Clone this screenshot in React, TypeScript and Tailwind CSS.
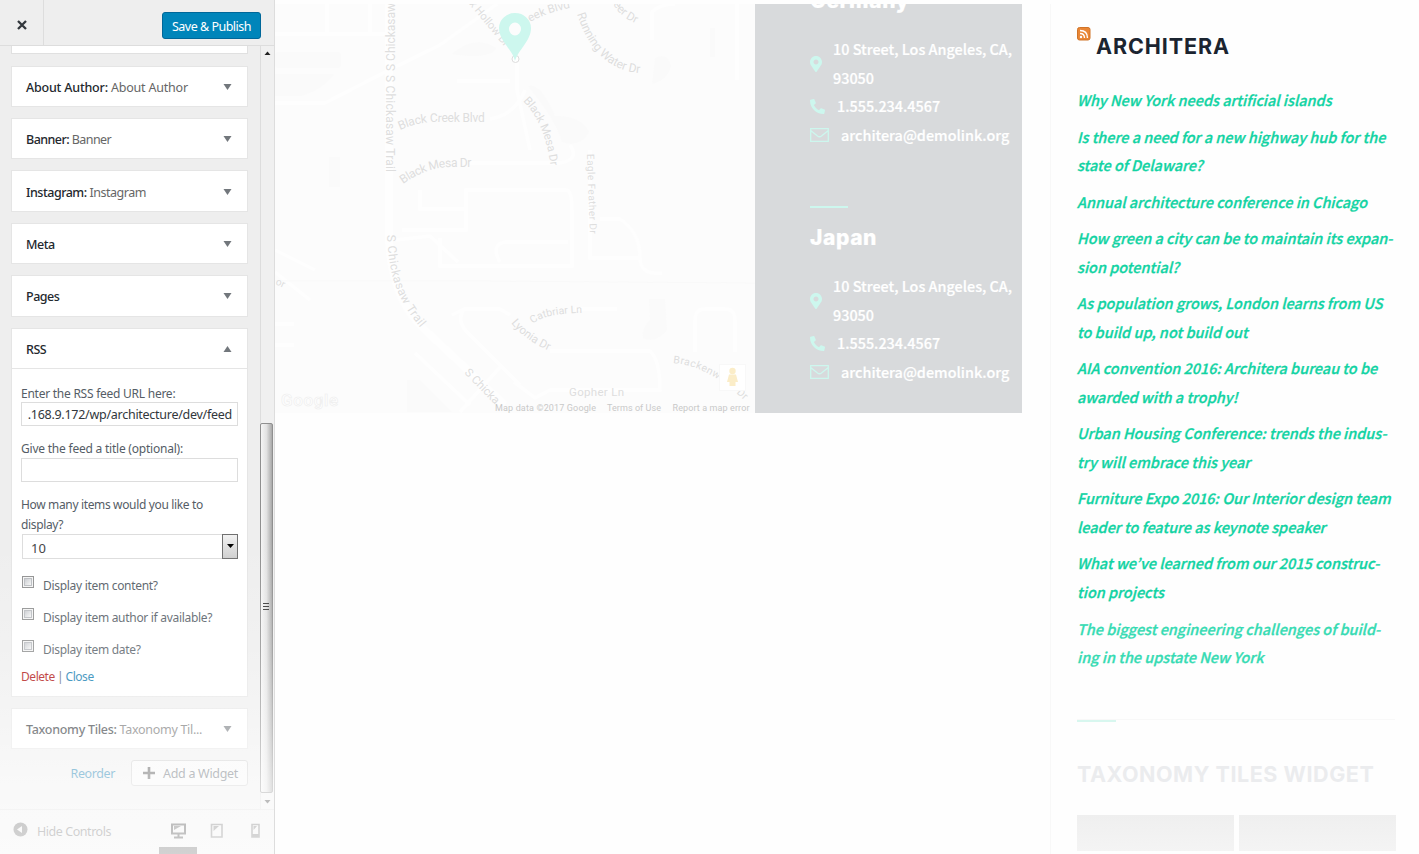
import React from "react";
import { FaMapMarkerAlt, FaPhone } from "react-icons/fa";

type Widget = { title: string; name?: string; tracking?: string };

const widgets: Widget[] = [
  { title: "About Author", name: "About Author", tracking: "tracking-[-0.2px]" },
  { title: "Banner", name: "Banner", tracking: "tracking-[-0.55px]" },
  { title: "Instagram", name: "Instagram", tracking: "tracking-[-0.48px]" },
  { title: "Meta" },
  { title: "Pages" },
];

const posts: string[][] = [
  ["Why New York needs artificial islands"],
  ["Is there a need for a new highway hub for the", "state of Delaware?"],
  ["Annual architecture conference in Chicago"],
  ["How green a city can be to maintain its expan-", "sion potential?"],
  ["As population grows, London learns from US", "to build up, not build out"],
  ["AIA convention 2016: Architera bureau to be", "awarded with a trophy!"],
  ["Urban Housing Conference: trends the indus-", "try will embrace this year"],
  ["Furniture Expo 2016: Our Interior design team", "leader to feature as keynote speaker"],
  ["What we’ve learned from our 2015 construc-", "tion projects"],
  ["The biggest engineering challenges of build-", "ing in the upstate New York"],
];

function Triangle({ up = false }: { up?: boolean }) {
  return (
    <svg width="9" height="6" viewBox="0 0 9 6" className="mb-px fill-[#72777c]">
      <path d={up ? "M0.5 6L4.5 0L8.5 6Z" : "M0.5 0L4.5 6L8.5 0Z"} />
    </svg>
  );
}

function WidgetHeader({ title, name, up, tracking = "tracking-[-0.5px]" }: Widget & { up?: boolean }) {
  return (
    <div className={`flex h-[39.3px] items-center justify-between pt-[2px] pr-[15px] pl-[14px] ${tracking}`}>
      <span className="mt-px leading-5 font-medium whitespace-nowrap text-[#23282d]">
        {title}
        {name && (
          <>
            : <span className="font-normal text-[#666]">{name}</span>
          </>
        )}
      </span>
      <Triangle up={up} />
    </div>
  );
}

function CheckRow({ label }: { label: string }) {
  return (
    <label className="flex h-[31.9px] items-start">
      <span className="mt-[2px] ml-px flex size-3 items-center justify-center border border-[#8e8f8f] bg-[#f4f4f4]">
        <span className="size-2 border border-[#b9bcc0] bg-linear-to-br from-[#c8cbcf] to-[#f6f6f6]" />
      </span>
      <span className="ml-[9px] pt-[2px] text-[12px] leading-5">{label}</span>
    </label>
  );
}

function Sidebar() {
  return (
    <aside className="relative flex h-full w-[275px] shrink-0 flex-col overflow-hidden border-r border-[#ddd] bg-[#eee] font-['Noto_Sans',sans-serif] text-[12.5px] text-[#555d66]">
      <header className="flex h-[46px] shrink-0 items-center justify-between border-b border-[#ddd]">
        <button className="flex h-full w-11 items-center justify-center border-r border-[#ddd] pt-1">
          <svg width="10" height="10" viewBox="0 0 10 10" className="stroke-[#32373c]" strokeWidth="2.3">
            <path d="M1 1L9 9M9 1L1 9" />
          </svg>
        </button>
        <button className="mt-[5px] mr-[13px] h-[27px] w-[99px] rounded-[3px] border border-[#006799] bg-[#0085ba] pt-[3px] text-[12.5px] leading-5 tracking-[-0.5px] whitespace-nowrap text-white">
          Save &amp; Publish
        </button>
      </header>

      <div className="flex h-[763px] shrink-0">
        <div className="w-[260px] pl-[11px]">
          <div className="h-2 w-[237px] border border-t-0 border-[#e0e0e0] bg-white" />
          <div className="mt-[11.8px] flex w-[237px] flex-col gap-[11px]">
            {widgets.map((w) => (
              <section key={w.title} className="h-[41.35px] border border-[#e5e5e5] bg-white">
                <WidgetHeader {...w} />
              </section>
            ))}
            <section className="h-[369.5px] border border-[#e5e5e5] bg-white">
              <WidgetHeader title="RSS" up />
              <div className="border-t border-[#e5e5e5] px-[9px] pt-[15px] text-[12px] leading-5 tracking-[-0.3px]">
                <div className="tracking-[-0.25px]">Enter the RSS feed URL here:</div>
                <div className="mt-[-2px] flex h-6 items-center justify-end overflow-hidden border border-[#ddd] px-[5px] pt-[2px] text-[12.5px] tracking-[-0.27px] whitespace-nowrap text-[#32373c]">
                  .168.9.172/wp/architecture/dev/feed
                </div>
                <div className="mt-[13px] tracking-[-0.22px]">Give the feed a title (optional):</div>
                <div className="mt-[-1px] h-6 border border-[#ddd]" />
                <div className="mt-[13px] tracking-[-0.35px]">
                  How many items would you like to
                  <br />
                  display?
                </div>
                <div className="mt-[-1px] ml-px flex h-[25px] items-stretch border border-[#ddd]">
                  <span className="flex-1 pt-[3px] pl-2 text-[13px] tracking-normal text-[#444]">10</span>
                  <span className="-my-px -mr-px flex w-4 items-center justify-center border border-[#707070] bg-linear-to-b from-[#f2f2f2] to-[#cfcfcf]">
                    <svg width="7" height="4" viewBox="0 0 7 4">
                      <path d="M0 0H7L3.5 4Z" />
                    </svg>
                  </span>
                </div>
                <div className="mt-[15px]">
                  <CheckRow label="Display item content?" />
                  <CheckRow label="Display item author if available?" />
                  <CheckRow label="Display item date?" />
                </div>
                <div className="-mt-[2px] tracking-[-0.45px] [word-spacing:-0.4px]">
                  <span className="text-[#a00]">Delete</span> | <span className="text-[#0073aa]">Close</span>
                </div>
              </div>
            </section>
            <section className="h-[41.35px] border border-[#e5e5e5] bg-white">
              <WidgetHeader title="Taxonomy Tiles" name="Taxonomy Til..." tracking="tracking-[-0.29px]" />
            </section>
            <div className="flex items-center justify-end tracking-[-0.4px]">
              <span className="mt-[3px] mr-4 text-[#0073aa]">Reorder</span>
              <button className="flex h-[26px] w-[117px] items-center rounded-[3px] border border-[#ccc] bg-[#f7f7f7] pl-[11px] whitespace-nowrap">
                <svg width="12" height="12" viewBox="0 0 12 12" className="mr-[8px] shrink-0 stroke-[#444]" strokeWidth="2.6">
                  <path d="M6 0V12M0 6H12" />
                </svg>
                <span className="mt-[3px] tracking-[-0.3px]">Add a Widget</span>
              </button>
            </div>
          </div>
        </div>
        <div className="flex w-[14px] flex-col border-l border-[#ddd] bg-[#f0f0f0]">
          <svg width="13" height="377" viewBox="0 0 13 377" className="shrink-0">
            <path d="M3.5 9L6.5 5.5L9.5 9Z" className="fill-[#222]" />
          </svg>
          <div className="-ml-px flex h-[370px] w-[13px] shrink-0 items-center justify-center rounded-[2px] border border-[#8f8f8f] bg-linear-to-r from-[#f5f5f5] via-[#e2e2e2] to-[#a8a8a8] pb-[4px]">
            <svg width="7" height="8" viewBox="0 0 7 8" className="stroke-[#333]">
              <path d="M0 1.5H6M0 4.5H6M0 7.5H6" />
            </svg>
          </div>
          <svg width="13" height="14" viewBox="0 0 13 14" className="shrink-0">
            <path d="M3.5 7L6.5 10.5L9.5 7Z" className="fill-[#333]" />
          </svg>
        </div>
      </div>

      <footer className="flex flex-1 items-center border-t border-[#ddd] pl-[13px] text-[#555]">
        <svg width="15" height="15" viewBox="0 0 15 15" className="mb-[5px]">
          <circle cx="7.5" cy="7.5" r="7" className="fill-[#555]" />
          <path d="M4 7.5L9 4V11Z" className="fill-[#eee]" />
        </svg>
        <span className="mt-px ml-[9px] w-[132px] tracking-[-0.45px]">Hide Controls</span>
        <svg width="95" height="44" viewBox="0 0 95 44" className="fill-none stroke-[#666]" strokeWidth="2">
          <path d="M3 14.5H16V23.5H3Z" className="stroke-[#222]" />
          <path d="M9.5 24V27M5 27.5H14" className="stroke-[#222]" />
          <path d="M5 20L12 16H5Z" className="fill-[#444] stroke-none" />
          <path d="M42.5 14.5H53V27H42.5Z" strokeWidth="1.6" />
          <path d="M44.5 21L50 16H44.5Z" className="fill-[#666] stroke-none" />
          <path d="M83 14.5H90V27H83Z" strokeWidth="1.6" />
          <path d="M83 25.5H90" strokeWidth="3" />
          <path d="M84.5 20L88 16H84.5Z" className="fill-[#666] stroke-none" />
        </svg>
      </footer>
      <div className="absolute bottom-0 left-[159px] h-[7px] w-[38px] bg-[#444]" />
      <div className="pointer-events-none absolute inset-x-0 bottom-0 h-[314px] bg-[linear-gradient(to_bottom,rgba(255,255,255,0)_0%,rgba(255,255,255,0.2)_35%,rgba(255,255,255,0.45)_61%,rgba(255,255,255,0.64)_77%,rgba(255,255,255,0.76)_100%)]" />
    </aside>
  );
}

function MapView() {
  return (
    <svg width="480" height="409" viewBox="275 4 480 409" className="shrink-0 bg-[#fcfcfc]">
      <g className="fill-[#fafafa]">
        <rect x="275" y="52" width="66" height="16" rx="3" />
        <path d="M275 74H334Q322 90 302 96H275Z" />
        <rect x="329" y="157" width="11" height="30" />
        <path d="M452 54Q475 34 496 48Q490 60 452 54Z" />
        <path d="M652 84L655 58Q668 52 671 66Q668 80 652 84Z" />
        <path d="M528 86Q540 82 555 116Q580 115 589 132Q580 148 562 142Q556 120 528 86Z" />
        <path d="M649 299H665L667 330Q655 344 643 338Q641 330 650 320Z" />
        <path d="M407 380H420L452 412H407Z" />
        <rect x="710" y="28" width="5" height="29" />
      </g>
      <g fill="none" className="stroke-[#fefefe]" strokeWidth="3.5">
        <path d="M275 34H389M327 4V34M370 4V34" />
        <path d="M275 103H325L389 70L440 45L497 4" />
        <path d="M389 4V240Q392 300 425 330L505 405" strokeWidth="8" />
        <path d="M457 81H510M517 58V90L530 150M490 119Q515 115 525 90" />
        <path d="M470 163H560Q580 160 570 145M420 190V209H466V190H566Q572 190 572 210V266H440V238" />
        <path d="M396 240L430 236L458 262M402 230H466V205M500 262Q490 245 505 242H568" />
        <path d="M590 150V258H640Q640 232 620 219H600M640 258Q640 275 662 273" />
        <path d="M575 309H617M452 315L464 309H500L510 315M464 309Q455 322 470 335L520 385M550 351H650Q660 360 660 390H550L535 398L514 382" />
        <path d="M695 352V320Q695 309 705 309H725Q735 309 735 320V352" />
        <path d="M415 353L470 405M502 365L460 412M652 40V12Q660 4 675 4M737 4V80" />
        <path d="M275 250L315 270M275 272L310 300M275 324H294M275 345H294" />
      </g>
      <path d="M275 281H480L755 283" fill="none" className="stroke-[#f9f9f9]" />
      <defs>
        <path id="r1" d="M395 71V-60" />
        <path id="r2" d="M386 75V190" />
        <path id="r3" d="M400 130Q420 121 440 122H500" />
        <path id="r4" d="M403 184Q425 168 450 167H490" />
        <path id="r5" d="M469 4L508 51" />
        <path id="r6" d="M530 22Q548 12 575 7" />
        <path id="r7" d="M577 14Q594 68 638 73Q650 74 660 73" />
        <path id="r8" d="M613 4Q622 20 645 27" />
        <path id="r9" d="M523 101Q546 124 551 170" />
        <path id="r10" d="M587 154L590 240" />
        <path id="r11" d="M387 235C389 275 396 300 424 332" />
        <path id="r12" d="M464 373L505 415" />
        <path id="r13" d="M511 323Q528 344 562 356" />
        <path id="r14" d="M533 324Q545 312 592 313" />
        <path id="r15" d="M673 363Q710 366 748 404" />
      </defs>
      <g className="fill-[#dedede] font-[Roboto,sans-serif] text-[12px]">
        <text><textPath href="#r1">S Chickasaw Trail</textPath></text>
        <text><textPath href="#r2" textLength="97">S Chickasaw Trail</textPath></text>
        <text><textPath href="#r3" textLength="86">Black Creek Blvd</textPath></text>
        <text><textPath href="#r4" textLength="72">Black Mesa Dr</textPath></text>
        <text className="text-[11px]"><textPath href="#r5">x Hollow Dr</textPath></text>
        <text className="text-[11.5px]"><textPath href="#r6">eek Blvd</textPath></text>
        <text><textPath href="#r7" textLength="92">Running Water Dr</textPath></text>
        <text className="text-[11.5px]"><textPath href="#r8">eer Dr</textPath></text>
        <text className="text-[11.5px]"><textPath href="#r9" textLength="72">Black Mesa Dr</textPath></text>
        <text className="text-[10px]"><textPath href="#r10" textLength="80">Eagle Feather Dr</textPath></text>
        <text><textPath href="#r11" textLength="101">S Chickasaw Trail</textPath></text>
        <text className="text-[11.5px]"><textPath href="#r12">S Chicka</textPath></text>
        <text className="text-[11.5px]"><textPath href="#r13">Lyonia Dr</textPath></text>
        <text className="text-[10.5px]"><textPath href="#r14">Catbriar Ln</textPath></text>
        <text className="text-[10.5px]"><textPath href="#r15" textLength="82">Brackenwood Dr</textPath></text>
        <text x="569" y="396" textLength="55" className="text-[11.5px]">Gopher Ln</text>
        <text x="275" y="284" transform="rotate(25 275 284)" className="text-[10px]">or</text>
      </g>
      <text x="281" y="406" textLength="57" className="fill-white stroke-[#efefef] font-[Roboto,sans-serif] text-[17px] font-medium" strokeWidth="0.7">
        Google
      </text>
      <g className="fill-[#c9c9c9] font-[Roboto,sans-serif] text-[9px]">
        <text x="495" y="411" textLength="101">Map data ©2017 Google</text>
        <text x="607" y="411" textLength="54">Terms of Use</text>
        <text x="672.5" y="411" textLength="77">Report a map error</text>
      </g>
      <rect x="719.5" y="364.5" width="26" height="26" className="fill-white stroke-[#f8f8f8]" />
      <g className="fill-[#fbedc8]">
        <circle cx="732.5" cy="371" r="3.2" />
        <path d="M729 374.5H736L738 382H735.5V386H729.5V382H727Z" />
      </g>
      <circle cx="515.5" cy="59" r="3.5" className="fill-white stroke-[#ddd]" />
      <path
        d="M515 61C513 50 499 41 499 28A16 15 0 0 1 531 28C531 41 518 50 515 61ZM515 22.5A6 6.5 0 1 0 515 35.5A6 6.5 0 1 0 515 22.5Z"
        fillRule="evenodd"
        className="fill-[#cdf7ee]"
      />
    </svg>
  );
}

function Office({ city }: { city: string }) {
  return (
    <section className="h-[237px] border-t-2 border-transparent">
      <h3 className="h-[59px] pt-[16px] font-[Inter,sans-serif] text-[21px] leading-[28px] font-extrabold tracking-[0.6px]">{city}</h3>
      <div className="flex items-center pt-[5px]">
        <FaMapMarkerAlt className="mt-px h-[16px] w-[12px] shrink-0 text-[#cdf7ee]" />
        <p className="ml-[11px] leading-[28.5px] whitespace-nowrap">
          10 Street, Los Angeles, CA,
          <br />
          93050
        </p>
      </div>
      <div className="flex h-[28.5px] items-center">
        <FaPhone className="size-[15px] shrink-0 -scale-x-100 text-[#cdf7ee]" />
        <span className="ml-[12px]">1.555.234.4567</span>
      </div>
      <div className="flex h-[28.5px] items-center">
        <svg width="19" height="14" viewBox="0 0 19 14" className="shrink-0 fill-none stroke-[#cdf7ee]" strokeWidth="1.3">
          <path d="M0.7 0.7H18.3V13.3H0.7ZM0.7 2.5L7.5 8Q9.5 9.5 11.5 8L18.3 2.5" />
        </svg>
        <span className="ml-[12px]">architera@demolink.org</span>
      </div>
    </section>
  );
}

function Feed() {
  return (
    <aside className="mt-1 flex-1 border-l border-[#f8f8f8] pl-[26px]">
      <div className="flex h-[64px] items-start pt-[22px]">
        <svg width="14" height="14" viewBox="0 0 14 14" className="mt-px">
          <rect x="0.5" y="0.5" width="12.5" height="12.5" rx="2" className="fill-[#e98635] stroke-[#d07428]" />
          <circle cx="4" cy="10" r="1.2" className="fill-white" />
          <path d="M3 6.5Q7.5 6.5 7.5 11M3 3.5Q10.5 3.5 10.5 11" className="fill-none stroke-white" strokeWidth="1.3" />
        </svg>
        <h2 className="mt-[5px] ml-[5px] font-[Inter,sans-serif] text-[21.5px] leading-[30px] font-bold tracking-[0.9px] text-[#1b2430]">ARCHITERA</h2>
      </div>
      <ul className="flex h-[643px] flex-col gap-[8.15px] pt-[18px] font-['Noto_Sans_CJK_KR',sans-serif] text-[14.45px] leading-[28.45px] font-medium whitespace-nowrap text-[#12d3a3] italic [-webkit-text-stroke:0.3px]">
        {posts.map((lines, i) => (
          <li key={lines[0]} className={i === 9 ? "text-[#37dbb3]" : ""}>
            {lines.map((line) => (
              <span key={line} className="block w-fit">{line}</span>
            ))}
          </li>
        ))}
      </ul>
      <div className="mt-[8px] h-[3px] w-[318px] border-t border-[#f8f8f8]">
        <div className="h-[2px] w-[39px] bg-[#d8f7ef]" />
      </div>
      <h2 className="mt-[37px] font-[Inter,sans-serif] text-[21.5px] leading-[30px] font-bold tracking-[0.55px] whitespace-nowrap text-[#ebecee]">TAXONOMY TILES WIDGET</h2>
      <div className="mt-[26px] flex gap-[5px]">
        <div className="h-9 w-[157px] bg-linear-to-b from-[#efefef] to-[#f4f4f4]" />
        <div className="h-9 w-[157px] bg-linear-to-b from-[#efefef] to-[#f4f4f4]" />
      </div>
    </aside>
  );
}

export default function App() {
  return (
    <div className="flex h-[854px] w-[1419px] overflow-hidden bg-[#fefefe]">
      <Sidebar />
      <main className="flex w-[775px] shrink-0 items-start pt-1">
        <MapView />
        <div className="h-[409px] w-[267px] overflow-hidden bg-[#d8dadc] pl-[55px] font-['Noto_Sans_CJK_KR',sans-serif] text-[14.4px] font-medium text-white [-webkit-text-stroke:0.2px]">
          <div className="-mt-[35px]">
            <Office city="Germany" />
            <div className="h-[2px] w-[38px] bg-[#cdf7ee]" />
            <div className="-mt-[2px]">
              <Office city="Japan" />
            </div>
          </div>
        </div>
      </main>
      <Feed />
    </div>
  );
}
